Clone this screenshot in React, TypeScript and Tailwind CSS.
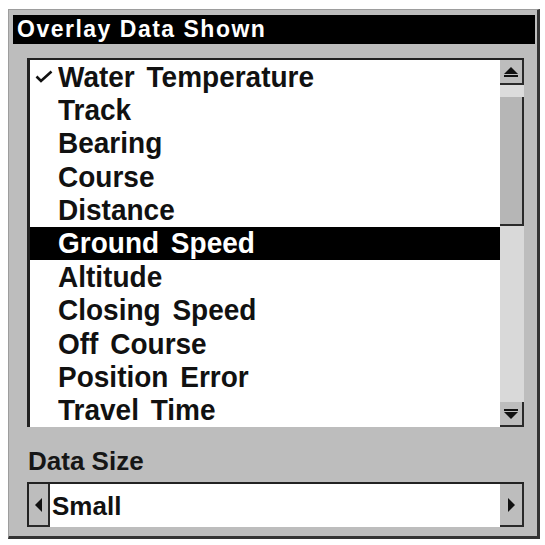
const items = [
  "Water Temperature",
  "Track",
  "Bearing",
  "Course",
  "Distance",
  "Ground Speed",
  "Altitude",
  "Closing Speed",
  "Off Course",
  "Position Error",
  "Travel Time",
];

const font = { fontFamily: '"Liberation Sans", Arial, sans-serif' };

const Tri = ({ dir }: { dir: "up" | "down" | "left" | "right" }) => {
  const pts = {
    up: "0,7 7,0 14,7",
    down: "0,0 14,0 7,7",
    left: "7,0 7,14 0,7",
    right: "0,0 0,14 7,7",
  }[dir];
  const vertical = dir === "up" || dir === "down";
  return (
    <svg width={vertical ? 14 : 7} height={vertical ? 7 : 14} viewBox={vertical ? "0 0 14 7" : "0 0 7 14"}>
      <polygon points={pts} fill="#111" />
    </svg>
  );
};

const ScrollBar = () => (
  <div className="flex flex-col w-[24px] h-full">
    <div className="h-[25px] bg-[#bdbdbd] border-r-2 border-b-2 border-[#2a2a2a] flex flex-col items-center justify-center gap-[1px]">
      <Tri dir="up" />
      <div className="w-[14px] h-[2px] bg-[#111]" />
    </div>
    <div className="h-[12px] bg-[#dcdcdc]" />
    <div className="h-[129px] bg-[#b6b6b6] border-r-2 border-b-2 border-[#2a2a2a]" />
    <div className="flex-1 bg-[#d9d9d9]" />
    <div className="h-[25px] bg-[#bdbdbd] border-r-2 border-b-2 border-[#2a2a2a] flex flex-col items-center justify-center gap-[1px]">
      <div className="w-[14px] h-[2px] bg-[#111]" />
      <Tri dir="down" />
    </div>
  </div>
);

const App = () => {
  const selected = 5;
  return (
    <div className="w-[545px] h-[545px] bg-white pl-[8px] pt-[9px]" style={font}>
      <div className="w-[532px] h-[530px] bg-[#bdbdbd] border-t border-l border-[#9d9d9d] border-r-[3px] border-b-[3px] border-r-[#333] border-b-[#333] flex flex-col pl-[4px] pr-[2px] pt-[5px]">
        <div className="h-[29px] bg-black text-white font-bold text-[23px] tracking-[1.5px] leading-[29px] pl-[4px]">
          Overlay Data Shown
        </div>

        <div className="mt-[14px] ml-[14px] w-[497px] h-[369px] bg-white border-t-2 border-l-[3px] border-[#222] flex">
          <div className="flex-1 flex flex-col">
            {items.map((item, i) => (
              <div
                key={item}
                className={
                  "h-[33.4px] flex items-center font-bold text-[28px] leading-none [word-spacing:4px] " +
                  (i === selected ? "bg-black text-white" : "text-[#111]")
                }
              >
                <div className="w-[28px] flex justify-end pr-[5px]">
                  {i === 0 && (
                    <svg width="18" height="13" viewBox="0 0 18 13">
                      <polyline points="1.5,6.5 6,11 16.5,1.5" fill="none" stroke="#111" strokeWidth="2.6" />
                    </svg>
                  )}
                </div>
                <span className="inline-block scale-y-[1.08]">{item}</span>
              </div>
            ))}
          </div>
          <ScrollBar />
        </div>

        <div className="mt-[19px] ml-[15px] h-[30px] leading-[30px] font-bold text-[26px] text-[#161616]">
          Data Size
        </div>

        <div className="mt-[6px] ml-[14px] w-[497px] h-[45px] bg-white border-t-2 border-l-2 border-[#222] flex">
          <div className="w-[21px] bg-[#bdbdbd] border-r-2 border-b-2 border-[#2a2a2a] flex items-center justify-center">
            <Tri dir="left" />
          </div>
          <div className="flex-1 flex items-center pl-[2px] font-bold text-[26px] text-[#111] leading-none">
            Small
          </div>
          <div className="w-[24px] bg-[#bdbdbd] border-r-2 border-b-2 border-[#2a2a2a] flex items-center justify-center">
            <Tri dir="right" />
          </div>
        </div>
      </div>
    </div>
  );
};

export default App;
